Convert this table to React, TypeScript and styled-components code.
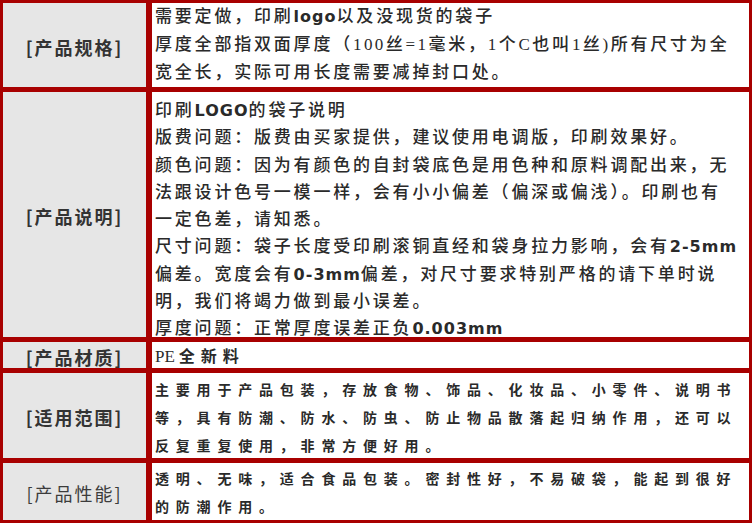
import React from 'react';
import styled, { createGlobalStyle } from 'styled-components';

const GlobalStyle = createGlobalStyle`
    html, body {
        margin: 0;
        padding: 0;
        background: #ffffff;
    }
`;

type Variant = 'plain' | 'heavy' | 'mixed';

interface SpecRow {
    label: string;
    light?: boolean;
    variant: Variant;
    lineHeight: number;
    padTop: number;
    lines: React.ReactNode[];
}

const SpecTable = styled.div`
    display: grid;
    grid-template-columns: 143px 597px;
    grid-template-rows: 84px 245px 26px 85px 57px;
    gap: 5px 6px;
    width: 752px;
    padding: 3px;
    box-sizing: border-box;
    background-color: #a80000;
`;

const Label = styled.div<{ $light?: boolean }>`
    display: flex;
    align-items: center;
    justify-content: center;
    background-color: #e6e6e6;
    color: ${({ $light }) => ($light ? '#3c3c3c' : '#333333')};
    font-family: "Noto Sans CJK SC", sans-serif;
    font-size: 18px;
    font-weight: ${({ $light }) => ($light ? 400 : 600)};
    letter-spacing: 2px;
    padding-top: 3px;
    box-sizing: border-box;
`;

const Content = styled.div<{ $variant: Variant; $lineHeight: number; $padTop: number }>`
    background-color: #ffffff;
    overflow: hidden;
    padding: ${({ $padTop }) => $padTop}px 0 0 3px;
    box-sizing: border-box;
    color: #2a2a2a;
    line-height: ${({ $lineHeight }) => $lineHeight}px;
    font-family: ${({ $variant }) =>
        $variant === 'heavy' ? '"Noto Sans CJK SC", sans-serif' : '"Liberation Serif", "Noto Sans CJK SC", serif'};
    font-size: ${({ $variant }) => ($variant === 'heavy' ? '14px' : '17px')};
    font-weight: ${({ $variant }) => ($variant === 'heavy' ? 700 : 500)};
    letter-spacing: ${({ $variant }) => ($variant === 'heavy' ? '6.8px' : '2.8px')};
`;

const Line = styled.div`
    white-space: nowrap;
`;

const Strong = styled.b`
    font-family: "DejaVu Sans", sans-serif;
    font-size: 16px;
    font-weight: 700;
    letter-spacing: 1px;
`;

const Num = styled.span`
    letter-spacing: 2.4px;
`;

const Serif = styled.span`
    font-family: "Liberation Serif", serif;
    font-size: 17px;
    font-weight: 400;
    letter-spacing: 0;
    margin-right: 4px;
`;

const Heavy = styled.span`
    display: inline-block;
    font-family: "Noto Sans CJK SC", sans-serif;
    font-size: 16px;
    font-weight: 700;
    letter-spacing: 6px;
`;

const rows: SpecRow[] = [
    {
        label: '[产品规格]',
        variant: 'plain',
        lineHeight: 28,
        padTop: 0,
        lines: [
            <>需要定做，印刷<Strong>logo</Strong>以及没现货的袋子</>,
            <>厚度全部指双面厚度（<Num>100</Num>丝<Num>=1</Num>毫米，<Num>1</Num>个<Num>C</Num>也叫<Num>1</Num>丝<Num>)</Num>所有尺寸为全</>,
            '宽全长，实际可用长度需要减掉封口处。',
        ],
    },
    {
        label: '[产品说明]',
        variant: 'plain',
        lineHeight: 27.25,
        padTop: 5,
        lines: [
            <>印刷<Strong>LOGO</Strong>的袋子说明</>,
            '版费问题：版费由买家提供，建议使用电调版，印刷效果好。',
            '颜色问题：因为有颜色的自封袋底色是用色种和原料调配出来，无',
            '法跟设计色号一模一样，会有小小偏差（偏深或偏浅）。印刷也有',
            '一定色差，请知悉。',
            <>尺寸问题：袋子长度受印刷滚铜直经和袋身拉力影响，会有<Strong>2-5mm</Strong></>,
            <>偏差。宽度会有<Strong>0-3mm</Strong>偏差，对尺寸要求特别严格的请下单时说</>,
            '明，我们将竭力做到最小误差。',
            <>厚度问题：正常厚度误差正负<Strong>0.003mm</Strong></>,
        ],
    },
    {
        label: '[产品材质]',
        variant: 'mixed',
        lineHeight: 26,
        padTop: 0,
        lines: [<><Serif>PE</Serif><Heavy>全新料</Heavy></>],
    },
    {
        label: '[适用范围]',
        variant: 'heavy',
        lineHeight: 28,
        padTop: 2,
        lines: [
            '主要用于产品包装，存放食物、饰品、化妆品、小零件、说明书',
            '等，具有防潮、防水、防虫、防止物品散落起归纳作用，还可以',
            '反复重复使用，非常方便好用。',
        ],
    },
    {
        label: '[产品性能]',
        light: true,
        variant: 'heavy',
        lineHeight: 27.5,
        padTop: 2,
        lines: [
            '透明、无味，适合食品包装。密封性好，不易破袋，能起到很好',
            '的防潮作用。',
        ],
    },
];

const App: React.FC = () => {
    return (
        <>
            <GlobalStyle />
            <SpecTable>
                {rows.map((row) => (
                    <React.Fragment key={row.label}>
                        <Label $light={row.light}>{row.label}</Label>
                        <Content $variant={row.variant} $lineHeight={row.lineHeight} $padTop={row.padTop}>
                            {row.lines.map((line, i) => (
                                <Line key={i}>{line}</Line>
                            ))}
                        </Content>
                    </React.Fragment>
                ))}
            </SpecTable>
        </>
    );
};

export default App;
